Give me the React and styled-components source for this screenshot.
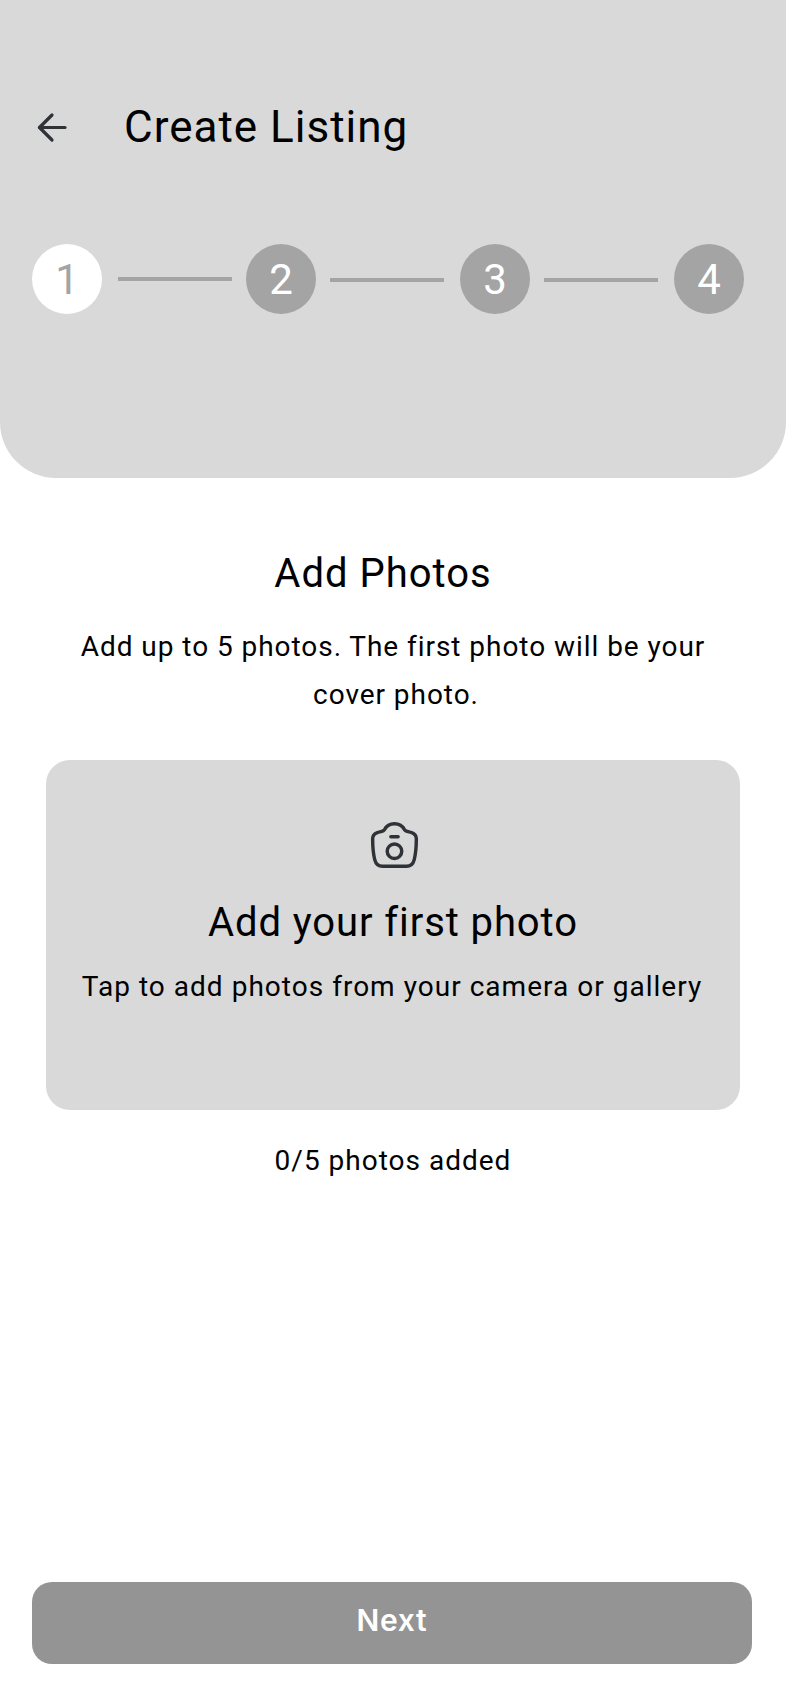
import React from "react";
import styled, { createGlobalStyle } from "styled-components";

const GlobalStyle = createGlobalStyle`
  html, body {
    margin: 0;
    padding: 0;
    background: #ffffff;
    font-family: Roboto, "Liberation Sans", sans-serif;
  }
`;

const Page = styled.div`
  width: 786px;
  height: 1704px;
  display: flex;
  flex-direction: column;
  background: #ffffff;
  color: #000000;
`;

const Header = styled.header`
  height: 478px;
  box-sizing: border-box;
  padding: 98px 32px 0;
  background: #d9d9d9;
  border-radius: 0 0 56px 56px;
`;

const TitleRow = styled.div`
  height: 58px;
  display: flex;
  align-items: center;
  gap: 55px;
  padding-left: 1px;
`;

const BackButton = styled.button`
  width: 36px;
  height: 36px;
  padding: 0;
  border: 0;
  background: none;
  color: #2f3237;
  display: flex;
  align-items: center;
  justify-content: center;
`;

const Title = styled.h1`
  margin: 0;
  font-size: 44px;
  font-weight: 400;
  letter-spacing: 1px;
`;

const Stepper = styled.div`
  margin-top: 88px;
  width: 712px;
  display: flex;
  align-items: center;
`;

const Step = styled.div`
  width: 70px;
  height: 70px;
  flex: none;
  border-radius: 50%;
  display: flex;
  align-items: center;
  justify-content: center;
  font-size: 42px;
  font-weight: 400;
  background: ${(p) => (p.$active ? "#ffffff" : "#a4a4a4")};
  color: ${(p) => (p.$active ? "#a4a4a4" : "#ffffff")};
`;

const StepLine = styled.div`
  flex: 1;
  height: 4px;
  margin: ${(p) => (p.$first ? "0 14px 0 16px" : "1px 16px 0 14px")};
  background: #a4a4a4;
`;

const Content = styled.main`
  flex: 1;
  display: flex;
  flex-direction: column;
  align-items: center;
  padding: 0 32px;
`;

const SectionTitle = styled.h2`
  margin: 71px 0 0;
  width: 100%;
  height: 50px;
  line-height: 50px;
  text-align: center;
  font-size: 40px;
  font-weight: 400;
  letter-spacing: 1px;
  transform: translateX(-10px);
`;

const Hint = styled.p`
  margin: 24px 0 0;
  width: 660px;
  text-align: center;
  font-size: 28px;
  line-height: 48px;
  letter-spacing: 0.95px;
`;

const HintLastLine = styled.span`
  display: inline-block;
  padding-left: 6px;
`;

const PhotoCard = styled.button`
  margin-top: 41px;
  width: 694px;
  height: 350px;
  box-sizing: border-box;
  padding: 59px 0 0;
  border: 0;
  border-radius: 24px;
  background: #d9d9d9;
  color: #000000;
  font-family: inherit;
  display: flex;
  flex-direction: column;
  align-items: center;
`;

const CameraIcon = styled.svg`
  width: 52px;
  height: 52px;
  margin-left: 4px;
  color: #2f3237;
`;

const CardTitle = styled.div`
  margin-top: 24px;
  font-size: 40px;
  line-height: 56px;
  letter-spacing: 0.9px;
`;

const CardHint = styled.div`
  margin-top: 18px;
  font-size: 28px;
  line-height: 36px;
  letter-spacing: 1.02px;
  transform: translateX(-1px);
`;

const Count = styled.div`
  margin-top: 33px;
  font-size: 28px;
  line-height: 36px;
  letter-spacing: 1px;
`;

const Footer = styled.footer`
  padding: 0 34px 40px 32px;
`;

const NextButton = styled.button`
  width: 100%;
  height: 82px;
  padding: 0 0 6px;
  border: 0;
  border-radius: 20px;
  background: #949494;
  color: #ffffff;
  font-family: Inter, Roboto, sans-serif;
  font-size: 30px;
  font-weight: 600;
  letter-spacing: 0.7px;
`;

const steps = [1, 2, 3, 4];

export default function App() {
  return (
    <Page>
      <GlobalStyle />
      <Header>
        <TitleRow>
          <BackButton aria-label="Back">
            <svg width="36" height="36" viewBox="0 0 36 36" fill="none" stroke="currentColor" strokeWidth="3.2" strokeLinecap="round" strokeLinejoin="round">
              <path d="M32 18.5H6.5" />
              <path d="M19 6 6.5 18.5 19 31" />
            </svg>
          </BackButton>
          <Title>Create Listing</Title>
        </TitleRow>
        <Stepper>
          {steps.map((n) => (
            <React.Fragment key={n}>
              <Step $active={n === 1}>{n}</Step>
              {n < 4 && <StepLine $first={n === 1} />}
            </React.Fragment>
          ))}
        </Stepper>
      </Header>
      <Content>
        <SectionTitle>Add Photos</SectionTitle>
        <Hint>
          Add up to 5 photos. The first photo will be your <HintLastLine>cover photo.</HintLastLine>
        </Hint>
        <PhotoCard>
          <CameraIcon viewBox="0 0 50 50" fill="none" stroke="currentColor" strokeWidth="3.3" strokeLinecap="round" strokeLinejoin="round">
            <path d="M15 10C17 6 20 4.5 24.5 4.5S32 6 34 10C35 12 38 12 41 13C44 14 45.5 16 45.5 19C45.5 26 45 33 43.5 39C42.5 43 40 45.5 36 45.5H13C9 45.5 6.5 43 5.5 39C4 33 3.5 26 3.5 19C3.5 16 5 14 8 13C11 12 14 12 15 10Z" />
            <path d="M21 17h7" />
            <circle cx="24.5" cy="31" r="7" />
          </CameraIcon>
          <CardTitle>Add your first photo</CardTitle>
          <CardHint>Tap to add photos from your camera or gallery</CardHint>
        </PhotoCard>
        <Count>0/5 photos added</Count>
      </Content>
      <Footer>
        <NextButton>Next</NextButton>
      </Footer>
    </Page>
  );
}
